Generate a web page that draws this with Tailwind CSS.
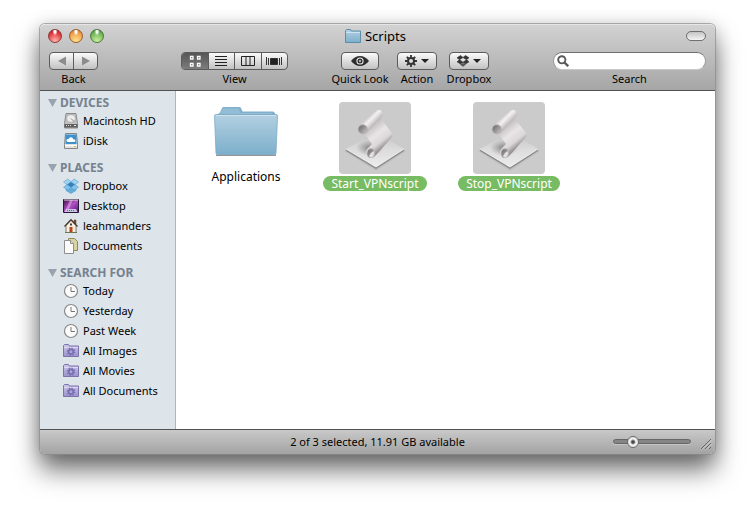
<!DOCTYPE html>
<html lang="en">
<head>
    <meta charset="UTF-8">
    <meta name="viewport" content="width=device-width, initial-scale=1.0">
    <title>Scripts</title>
    <!-- Tailwind CSS for styling -->
    <script src="https://cdn.jsdelivr.net/npm/@tailwindcss/browser@4"></script>
    <style>
        body {
            font-family: 'Noto Sans', 'Open Sans', sans-serif;
        }
        /* Status bar icon size slider */
        .size-slider {
            appearance: none;
            height: 12px;
            background: transparent;
        }
        .size-slider::-webkit-slider-runnable-track {
            height: 5px;
            border-radius: 3px;
            border: 1px solid #666;
            background: #858585;
            box-shadow: 0 1px 0 #c4c4c4;
        }
        .size-slider::-webkit-slider-thumb {
            appearance: none;
            width: 12px;
            height: 12px;
            margin-top: -4px;
            border-radius: 50%;
            border: 1px solid #6a6a6a;
            background: radial-gradient(circle, #444 0 1px, #999 2px, #f4f4f4 3px, #ddd 6px);
        }
    </style>
</head>
<body class="bg-white text-black text-[11px] leading-4">

    <!-- Shared gradients and symbols -->
    <svg class="absolute w-0 h-0" aria-hidden="true">
        <defs>
            <linearGradient id="folder-blue" x1="0" y1="0" x2="0" y2="1">
                <stop offset="0" stop-color="#b3d0e2"/><stop offset="1" stop-color="#7cafcb"/>
            </linearGradient>
            <linearGradient id="folder-purple" x1="0" y1="0" x2="0" y2="1">
                <stop offset="0" stop-color="#cdc8ea"/><stop offset="1" stop-color="#9a92ca"/>
            </linearGradient>
            <linearGradient id="plate" x1="0" y1="0" x2="0" y2="1">
                <stop offset="0" stop-color="#c2c2c2"/><stop offset="0.5" stop-color="#dcdcdc"/><stop offset="1" stop-color="#ececec"/>
            </linearGradient>
            <radialGradient id="plate-shade">
                <stop offset="0" stop-color="#555" stop-opacity="0.7"/><stop offset="1" stop-color="#777" stop-opacity="0"/>
            </radialGradient>
            <linearGradient id="tube" gradientUnits="userSpaceOnUse" x1="28" y1="15" x2="37" y2="24">
                <stop offset="0" stop-color="#c9c5c6"/><stop offset="0.35" stop-color="#f4f1f2"/><stop offset="1" stop-color="#a8a3a5"/>
            </linearGradient>
            <linearGradient id="sheet" gradientUnits="userSpaceOnUse" x1="31" y1="25" x2="46" y2="44">
                <stop offset="0" stop-color="#c4bfc1"/><stop offset="0.4" stop-color="#e9e5e6"/><stop offset="0.75" stop-color="#dcd8d9"/><stop offset="1" stop-color="#969193"/>
            </linearGradient>
            <linearGradient id="curl" x1="0" y1="0" x2="1" y2="1">
                <stop offset="0" stop-color="#686464"/><stop offset="1" stop-color="#cbc8c8"/>
            </linearGradient>
            <linearGradient id="aurora" x1="0" y1="0" x2="1" y2="1">
                <stop offset="0" stop-color="#3d1246"/><stop offset="0.5" stop-color="#b14fc4"/><stop offset="1" stop-color="#3a1d6c"/>
            </linearGradient>

            <symbol id="script-icon" viewBox="0 0 72 72">
                <path d="M5 49 37 69 67 49 37 34z" fill="#000" opacity=".06"/>
                <path d="M7 47v2l30 18 28-18v-2z" fill="#8a8a8a"/>
                <path d="M7 47 37 65 65 47 37 30z" fill="url(#plate)"/>
                <path d="M7 47 37 65 65 47" fill="none" stroke="#f8f8f8" stroke-width=".8"/>
                <ellipse cx="31" cy="46" rx="14" ry="8" fill="url(#plate-shade)"/>
                <path d="M25 31 38 13l5 5 10 13q1 2 0 4L37 53q-2 3-5 3-3 0-4-3-2-4 1-7l4-4z" fill="url(#sheet)"/>
                <ellipse cx="32" cy="51" rx="4.200" ry="5" fill="#bcb8b9"/>
                <ellipse cx="32" cy="51.500" rx="3.500" ry="4.300" fill="url(#curl)"/>
                <path d="M30 54q2-4 5-5 0 6-3 6.500-1 0-2-1.500z" fill="#e4e1e2"/>
                <path d="M20 23.500 37.500 8.500Q39.500 7 42 8.500 44.500 11 43.500 14L28 30.500q-3 3-6.500 1-3.500-3.500-1.500-8z" fill="url(#tube)"/>
                <ellipse cx="23.800" cy="27.300" rx="5" ry="5" fill="#b5b0b2"/>
                <ellipse cx="23.800" cy="27.500" rx="4.200" ry="4.200" fill="url(#curl)"/>
            </symbol>

            <symbol id="clock-icon" viewBox="0 0 16 16">
                <circle cx="8" cy="8" r="6.500" fill="#fafafa" stroke="#898989" stroke-width="1.200"/>
                <path d="M8 4v4.500h4" fill="none" stroke="#777"/>
            </symbol>

            <symbol id="smart-folder-icon" viewBox="0 0 16 16">
                <path d="M.5 13.500V2.500l1-1h4l1 1.500h9v10.500z" fill="url(#folder-purple)" stroke="#7b73aa"/>
                <path d="M1 4.500h14" stroke="#dedaf3"/>
                <circle cx="8" cy="8.700" r="2.300" fill="none" stroke="#766eae" stroke-width="1.600"/>
                <circle cx="8" cy="8.700" r="3.700" fill="none" stroke="#766eae" stroke-width="1.200" stroke-dasharray="1.450 1.450"/>
            </symbol>
        </defs>
    </svg>

    <div class="min-h-screen flex flex-col px-10 pt-6 pb-[54px]">
        <!-- Finder window -->
        <div class="flex-1 flex flex-col rounded-[5px] ring-1 ring-[#8d8d8d]/70 shadow-[0_16px_26px_rgba(0,0,0,0.55),0_2px_18px_rgba(0,0,0,0.2)]">

            <!-- Title bar and toolbar -->
            <header class="rounded-t-[5px] bg-linear-to-b from-[#d2d2d2] to-[#a6a6a6] border-t border-t-[#e6e6e6] border-b border-b-[#515151] px-[9px] pb-[3px]">
                <div class="relative flex items-center justify-between h-[21px]">
                    <div class="flex gap-[7px] -ml-px">
                        <button aria-label="Close" class="size-3.5 rounded-full border border-[#8e3a3a] bg-[radial-gradient(ellipse_at_50%_10%,#fff_0_10%,transparent_30%),radial-gradient(circle_at_50%_90%,#ffb6b0,#e0383c_65%,#a92328)]"></button>
                        <button aria-label="Minimize" class="size-3.5 rounded-full border border-[#9a5f2c] bg-[radial-gradient(ellipse_at_50%_10%,#fff_0_10%,transparent_30%),radial-gradient(circle_at_50%_90%,#ffe590,#f0a04a_65%,#b9652a)]"></button>
                        <button aria-label="Zoom" class="size-3.5 rounded-full border border-[#4c7a3c] bg-[radial-gradient(ellipse_at_50%_10%,#fff_0_10%,transparent_30%),radial-gradient(circle_at_50%_90%,#cdf0a0,#6fb558_65%,#417f35)]"></button>
                    </div>
                    <h1 class="absolute inset-x-0 mx-auto w-max flex items-center gap-1 pr-1 text-[13px]">
                        <svg class="size-4" viewBox="0 0 16 16">
                            <path d="M.5 14.500V2.500l1-1h4l1 1.500h9v11.500z" fill="url(#folder-blue)" stroke="#5d8dab"/>
                            <path d="M1 4.500h14" stroke="#cfe3ef"/>
                        </svg>
                        Scripts
                    </h1>
                    <button aria-label="Toggle toolbar" class="w-5 h-2.5 rounded-full border border-[#6f6f6f] bg-linear-to-b from-[#c4c4c4] to-[#f4f4f4]"></button>
                </div>

                <div class="flex pt-1.5">
                    <div class="w-[49px] flex flex-col items-center">
                        <div class="flex w-full h-[18px] rounded-[4px] border border-[#5c5c5c] divide-x divide-[#5c5c5c] bg-linear-to-b from-[#fbfbfb] to-[#c2c2c2]">
                            <button aria-label="Back" class="flex-1 flex items-center justify-center">
                                <svg class="w-2.5 h-2.5" viewBox="0 0 10 10"><path d="M9 .5v9L1 5z" fill="#8c8c8c"/></svg>
                            </button>
                            <button aria-label="Forward" class="flex-1 flex items-center justify-center">
                                <svg class="w-2.5 h-2.5" viewBox="0 0 10 10"><path d="M1 .5v9L9 5z" fill="#8c8c8c"/></svg>
                            </button>
                        </div>
                        <span class="pt-px">Back</span>
                    </div>

                    <div class="ml-[83px] w-[107px] flex flex-col items-center">
                        <div class="flex w-full h-[18px] rounded-[4px] border border-[#5c5c5c] divide-x divide-[#5c5c5c] bg-linear-to-b from-[#fbfbfb] to-[#c2c2c2] overflow-hidden">
                            <button aria-label="Icon view" class="flex-1 flex items-center justify-center bg-linear-to-b from-[#565656] to-[#7c7c7c]">
                                <svg class="w-3 h-3" viewBox="0 0 12 12" fill="#444" stroke="#fff" stroke-width="1.300"><path d="M1.500 1.500h2.500v2.500H1.500zM8.500 1.500H11v2.500H8.500zM1.500 8.500H4V11H1.500zM8.500 8.500H11V11H8.500z"/></svg>
                            </button>
                            <button aria-label="List view" class="flex-1 flex items-center justify-center">
                                <svg class="w-3 h-3" viewBox="0 0 12 12" stroke="#222"><path d="M0 1.500h12M0 4.500h12M0 7.500h12M0 10.500h12"/></svg>
                            </button>
                            <button aria-label="Column view" class="flex-1 flex items-center justify-center">
                                <svg class="w-[14px] h-3" viewBox="0 0 14 12" fill="none" stroke="#222"><path d="M.5 1.500h13v9H.5zM5 1.500v9M9 1.500v9"/></svg>
                            </button>
                            <button aria-label="Cover Flow view" class="flex-1 flex items-center justify-center">
                                <svg class="w-4 h-3" viewBox="0 0 16 12" stroke="#333"><path d="M.5 2v8M2.500 3v7M13.500 3v7M15.500 2v8"/><path d="M4.500 3.500h7v6h-7z" fill="#222"/></svg>
                            </button>
                        </div>
                        <span class="pt-px">View</span>
                    </div>

                    <div class="ml-[44px] w-[56px] flex flex-col items-center">
                        <button aria-label="Quick Look" class="flex items-center justify-center w-[38px] h-[18px] rounded-[4px] border border-[#5c5c5c] bg-linear-to-b from-[#fbfbfb] to-[#c2c2c2]">
                            <svg class="w-[18px] h-3" viewBox="0 0 18 12">
                                <path d="M0 6q4-5 9-5t9 5q-4 5-9 5T0 6z" fill="#2e2e2e"/>
                                <circle cx="9" cy="6" r="3.600" fill="#eee"/><circle cx="9" cy="6" r="2.500" fill="#2e2e2e"/><circle cx="9" cy="6" r="1" fill="#ddd"/>
                            </svg>
                        </button>
                        <span class="pt-px whitespace-nowrap">Quick Look</span>
                    </div>

                    <div class="ml-[9px] w-10 flex flex-col items-center">
                        <button aria-label="Action" aria-haspopup="menu" class="flex items-center justify-center gap-1 w-10 h-[18px] rounded-[4px] border border-[#5c5c5c] bg-linear-to-b from-[#fbfbfb] to-[#c2c2c2]">
                            <svg class="w-3 h-3" viewBox="0 0 12 12" fill="none" stroke="#333">
                                <circle cx="6" cy="6" r="3" stroke-width="2"/>
                                <path d="M6 0v2.500M6 9.500V12M0 6h2.500M9.500 6H12M1.800 1.800l1.700 1.700M8.500 8.500l1.700 1.700M10.200 1.800 8.500 3.500M3.500 8.500l-1.700 1.700" stroke-width="1.800"/>
                            </svg>
                            <svg class="w-2 h-1" viewBox="0 0 8 4"><path d="M0 0h8L4 4z" fill="#222"/></svg>
                        </button>
                        <span class="pt-px">Action</span>
                    </div>

                    <div class="ml-2.5 w-11 flex flex-col items-center">
                        <button aria-label="Dropbox" aria-haspopup="menu" class="flex items-center justify-center gap-1 w-10 h-[18px] rounded-[4px] border border-[#5c5c5c] bg-linear-to-b from-[#fbfbfb] to-[#c2c2c2]">
                            <svg class="w-3 h-3" viewBox="0 0 12 12" fill="#333">
                                <path d="M3.500.5 6 2.500 2.500 4.800 0 2.800zM8.500.5 12 2.800 9.500 4.800 6 2.500zM2.500 4.800 6 7.200 3.500 9 0 6.800zM9.500 4.800 12 6.800 8.500 9 6 7.200z" stroke="#333" stroke-width=".6"/>
                                <path d="M3 9.600 6 8l3 1.600L6 11.800z" fill="#555"/>
                            </svg>
                            <svg class="w-2 h-1" viewBox="0 0 8 4"><path d="M0 0h8L4 4z" fill="#222"/></svg>
                        </button>
                        <span class="pt-px">Dropbox</span>
                    </div>

                    <div class="ml-auto w-[153px] flex flex-col items-center">
                        <div class="flex items-center w-full h-[18px] rounded-full bg-white border border-t-[#6e6e6e] border-x-[#9a9a9a] border-b-[#c8c8c8] px-[3px]">
                            <svg class="w-3 h-3 shrink-0" viewBox="0 0 12 12" fill="none" stroke="#5a5a5a">
                                <circle cx="4.800" cy="4.800" r="3.600" stroke-width="1.900"/><path d="m7.500 7.500 3.700 3.700" stroke-width="2.400"/>
                            </svg>
                            <input id="search" type="text" class="flex-1 min-w-0 px-1 outline-none">
                        </div>
                        <label for="search" class="pt-px">Search</label>
                    </div>
                </div>
            </header>

            <div class="flex-1 flex bg-white">
                <!-- Sidebar -->
                <nav class="w-[136px] shrink-0 bg-[#dde4ea] border-r border-[#b1b5b8] pt-1 pl-2">
                    <section class="mb-[9px]">
                        <h2 class="flex items-center gap-[3px] text-xs leading-4 font-bold text-[#76828f]">
                            <svg class="w-[9px] h-2" viewBox="0 0 9 8"><path d="M0 0h9L4.500 8z" fill="#99a3ae"/></svg>DEVICES
                        </h2>
                        <ul class="pl-[15px]">
                            <li><a href="#" class="flex items-center gap-1 h-5">
                                <svg class="size-4" viewBox="0 0 16 16">
                                    <path d="M3 .5h10l1.500 10v4.500h-13v-4.500z" fill="#c2c2c2" stroke="#8a8a8a"/>
                                    <ellipse cx="8" cy="5.500" rx="4.300" ry="3.800" fill="#ededed" stroke="#a5a5a5" stroke-width=".7"/>
                                    <path d="m8 5.500 3.500 3.500" stroke="#888"/><path d="M1.500 11h13v3.500h-13z" fill="#5f5f5f"/>
                                    <path d="M3 12.500h6" stroke="#ddd" stroke-dasharray="1 1"/><path d="M11 12.500h2" stroke="#eee"/>
                                </svg>Macintosh HD</a></li>
                            <li><a href="#" class="flex items-center gap-1 h-5">
                                <svg class="size-4" viewBox="0 0 16 16">
                                    <path d="M2.500.5h11l1 11v4h-13v-4z" fill="#e2e2e2" stroke="#858585"/>
                                    <path d="M2.500 1.500h11v9.500h-11z" fill="#3c92cf"/>
                                    <path d="M5 9q-2-.3-1.500-2Q4 5.700 5.500 6 6.500 3.500 9 4.500q1 .5 1.200 1.700Q12.500 6 12.500 7.800 12.300 9 11 9z" fill="#fff"/>
                                    <path d="M2 12.500h12" stroke="#fff"/><path d="M11 13.500h2" stroke="#d8b931"/>
                                </svg>iDisk</a></li>
                        </ul>
                    </section>

                    <section class="mb-[9px]">
                        <h2 class="flex items-center gap-[3px] text-xs leading-4 font-bold text-[#76828f]">
                            <svg class="w-[9px] h-2" viewBox="0 0 9 8"><path d="M0 0h9L4.500 8z" fill="#99a3ae"/></svg>PLACES
                        </h2>
                        <ul class="pl-[15px]">
                            <li><a href="#" class="flex items-center gap-1 h-5">
                                <svg class="size-4" viewBox="0 0 16 16" stroke="#4d94c6" stroke-width=".5">
                                    <path d="M3 8.500v4l5 3 5-3v-4l-5 2z" fill="#64aede"/>
                                    <path d="M8 4 12 6.500 8 9.500 4 6.500z" fill="#337fb9"/>
                                    <path d="M4.800 1 8 3.800 3.800 6.600.5 4zM11.200 1l4.300 3-3.300 2.600L8 3.800z" fill="#9fd3f2"/>
                                    <path d="M3.800 6.600 8 9.600 4.800 12 .5 9.200zM12.200 6.600l3.300 2.600-4.300 2.800L8 9.600z" fill="#83c3ec"/>
                                </svg>Dropbox</a></li>
                            <li><a href="#" class="flex items-center gap-1 h-5">
                                <svg class="size-4" viewBox="0 0 16 16">
                                    <path d="M.5 1.500h15v13H.5z" fill="url(#aurora)" stroke="#2b1636"/>
                                    <path d="M7 2h3l-4 9H3z" fill="#eaa6ef" opacity=".6"/>
                                    <path d="M1 2h14" stroke="#ddd"/><path d="M1.500 14h13l-1.500-3H3z" fill="#c9c5e2"/><path d="M4 12.500h8" stroke="#4b60b5" stroke-dasharray="1 1"/>
                                </svg>Desktop</a></li>
                            <li><a href="#" class="flex items-center gap-1 h-5">
                                <svg class="size-4" viewBox="0 0 16 16">
                                    <path d="M11 2h2v4h-2z" fill="#a33f2c" stroke="#442" stroke-width=".5"/>
                                    <path d="M3 7.500 8 2.500l5 5v7H3z" fill="#f6efdf" stroke="#6c604d" stroke-width=".8"/>
                                    <path d="M1.500 8.500 8 1.700l6.500 6.800" fill="none" stroke="#3e3128" stroke-width="1.200"/>
                                    <path d="M6.500 9h3v5.500h-3z" fill="#b4431e"/><path d="M7 5.500h2v2H7z" fill="#444"/><path d="M2 14.500h12" stroke="#6d7450"/>
                                </svg>leahmanders</a></li>
                            <li><a href="#" class="flex items-center gap-1 h-5">
                                <svg class="size-4" viewBox="0 0 16 16">
                                    <path d="M5.500.5h6l3 3v9h-9z" fill="#d9d3a4" stroke="#908a5e"/>
                                    <path d="M1.500 2.500h6l3 3v10h-9z" fill="#fbfbfb" stroke="#8f8f8f"/>
                                    <path d="M7.500 2.500v3h3" fill="#ddd" stroke="#8f8f8f"/>
                                </svg>Documents</a></li>
                        </ul>
                    </section>

                    <section>
                        <h2 class="flex items-center gap-[3px] text-xs leading-4 font-bold text-[#76828f]">
                            <svg class="w-[9px] h-2" viewBox="0 0 9 8"><path d="M0 0h9L4.500 8z" fill="#99a3ae"/></svg>SEARCH FOR
                        </h2>
                        <ul class="pl-[15px]">
                            <li><a href="#" class="flex items-center gap-1 h-5"><svg class="size-4"><use href="#clock-icon"/></svg>Today</a></li>
                            <li><a href="#" class="flex items-center gap-1 h-5"><svg class="size-4"><use href="#clock-icon"/></svg>Yesterday</a></li>
                            <li><a href="#" class="flex items-center gap-1 h-5"><svg class="size-4"><use href="#clock-icon"/></svg>Past Week</a></li>
                            <li><a href="#" class="flex items-center gap-1 h-5"><svg class="size-4"><use href="#smart-folder-icon"/></svg>All Images</a></li>
                            <li><a href="#" class="flex items-center gap-1 h-5"><svg class="size-4"><use href="#smart-folder-icon"/></svg>All Movies</a></li>
                            <li><a href="#" class="flex items-center gap-1 h-5"><svg class="size-4"><use href="#smart-folder-icon"/></svg>All Documents</a></li>
                        </ul>
                    </section>
                </nav>

                <!-- Folder contents -->
                <main class="flex-1 flex items-start pt-[11px] pl-[17px] text-[12px]">
                    <a href="#" class="w-[106px] flex flex-col items-center">
                        <svg class="w-[72px] h-[67px]" viewBox="0 1 72 67">
                            <path d="M6 53.500h60v1.500H6z" fill="#666" opacity=".7"/>
                            <path d="M6 14.500 10 11.500 12 7q.5-1 2-1h15q1.500 0 2 1l1.500 3.500h30q1.500 0 2 1l1.500 3v10H6z" fill="#82b0cc"/>
                            <path d="M12.500 7.500h16l2 4.500h31v1H10z" fill="#93bdd6"/>
                            <path d="M4.500 15q0-1.500 1.500-1.500h60q1.500 0 1.500 1.500L66 52q0 1.500-1.500 1.500h-57Q6 53.500 6 52z" fill="url(#folder-blue)" stroke="#7ba9c4" stroke-width=".8"/>
                            <path d="M6 14.500h60" stroke="#cfe2ee"/>
                        </svg>
                        <span class="px-2">Applications</span>
                    </a>
                    <a href="#" class="ml-[23px] w-[106px] flex flex-col items-center">
                        <svg class="size-[72px] rounded-[4px] bg-[#cbcbcb]"><use href="#script-icon"/></svg>
                        <span class="mt-0.5 px-2 rounded-full bg-[#77bb62] text-white leading-[15px]">Start_VPNscript</span>
                    </a>
                    <a href="#" class="ml-7 w-[106px] flex flex-col items-center">
                        <svg class="size-[72px] rounded-[4px] bg-[#cbcbcb]"><use href="#script-icon"/></svg>
                        <span class="mt-0.5 px-2 rounded-full bg-[#77bb62] text-white leading-[15px]">Stop_VPNscript</span>
                    </a>
                </main>
            </div>

            <!-- Status bar -->
            <footer class="relative flex items-center justify-end gap-2 h-[25px] pr-[3px] pb-px rounded-b-[5px] border-t border-[#515151] bg-linear-to-b from-[#c9c9c9] to-[#a3a3a3]">
                <p class="absolute inset-x-0 text-center">2 of 3 selected, 11.91 GB available</p>
                <input type="range" min="0" max="100" value="21" aria-label="Icon size" class="size-slider relative w-[78px]">
                <svg class="w-[13px] h-[13px] mt-1" viewBox="0 0 13 13" fill="none">
                    <path d="M2 12 12 2M6 12l6-6M10 12l2-2" stroke="#666"/>
                    <path d="M3 12.500 12.500 3M7 12.500 12.500 7" stroke="#ddd" stroke-width=".6"/>
                </svg>
            </footer>
        </div>
    </div>

</body>
</html>
